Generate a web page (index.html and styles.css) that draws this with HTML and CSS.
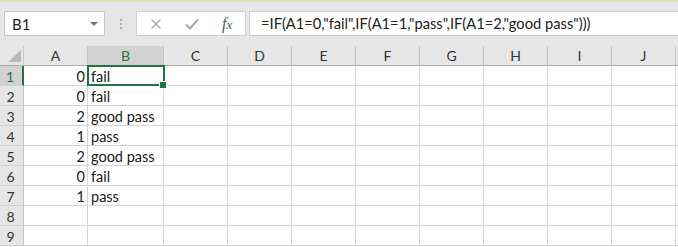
FILE: index.html
```html
<!DOCTYPE html>
<html>
<head>
<meta charset="utf-8">
<link rel="stylesheet" href="styles.css">
</head>
<body>
<div class="app">
  <div class="topbar">
    <div class="namebox"><span class="ref">B1</span><span class="caret"></span></div>
    <div class="grip"><i></i><i></i><i></i></div>
    <div class="fxbox">
      <svg class="ico" width="12" height="12" viewBox="0 0 12 12"><path d="M1.5 1.5 L10.5 10.5 M10.5 1.5 L1.5 10.5" stroke="#a8a8a8" stroke-width="1.4" fill="none"/></svg>
      <svg class="ico" width="14" height="12" viewBox="0 0 14 12"><path d="M1 6.5 L5 10.5 L13 1.5" stroke="#a8a8a8" stroke-width="2" fill="none"/></svg>
      <span class="fx"><i>f</i><i class="xs">x</i></span>
    </div>
    <div class="formula">=IF(A1=0,"fail",IF(A1=1,"pass",IF(A1=2,"good pass")))</div>
  </div>
  <div class="sheet">
    <div class="corner"><span class="tri"></span></div>
    <div class="ch">A</div><div class="ch sel">B</div><div class="ch">C</div><div class="ch">D</div><div class="ch">E</div><div class="ch">F</div><div class="ch">G</div><div class="ch">H</div><div class="ch">I</div><div class="ch">J</div><div class="ch last"></div>

    <div class="rh sel">1</div><div class="c num">0</div><div class="c active">fail</div><div class="c"></div><div class="c"></div><div class="c"></div><div class="c"></div><div class="c"></div><div class="c"></div><div class="c"></div><div class="c"></div><div class="c"></div>
    <div class="rh">2</div><div class="c num">0</div><div class="c">fail</div><div class="c"></div><div class="c"></div><div class="c"></div><div class="c"></div><div class="c"></div><div class="c"></div><div class="c"></div><div class="c"></div><div class="c"></div>
    <div class="rh">3</div><div class="c num">2</div><div class="c">good pass</div><div class="c"></div><div class="c"></div><div class="c"></div><div class="c"></div><div class="c"></div><div class="c"></div><div class="c"></div><div class="c"></div><div class="c"></div>
    <div class="rh">4</div><div class="c num">1</div><div class="c">pass</div><div class="c"></div><div class="c"></div><div class="c"></div><div class="c"></div><div class="c"></div><div class="c"></div><div class="c"></div><div class="c"></div><div class="c"></div>
    <div class="rh">5</div><div class="c num">2</div><div class="c">good pass</div><div class="c"></div><div class="c"></div><div class="c"></div><div class="c"></div><div class="c"></div><div class="c"></div><div class="c"></div><div class="c"></div><div class="c"></div>
    <div class="rh">6</div><div class="c num">0</div><div class="c">fail</div><div class="c"></div><div class="c"></div><div class="c"></div><div class="c"></div><div class="c"></div><div class="c"></div><div class="c"></div><div class="c"></div><div class="c"></div>
    <div class="rh">7</div><div class="c num">1</div><div class="c">pass</div><div class="c"></div><div class="c"></div><div class="c"></div><div class="c"></div><div class="c"></div><div class="c"></div><div class="c"></div><div class="c"></div><div class="c"></div>
    <div class="rh">8</div><div class="c"></div><div class="c"></div><div class="c"></div><div class="c"></div><div class="c"></div><div class="c"></div><div class="c"></div><div class="c"></div><div class="c"></div><div class="c"></div><div class="c"></div>
    <div class="rh">9</div><div class="c"></div><div class="c"></div><div class="c"></div><div class="c"></div><div class="c"></div><div class="c"></div><div class="c"></div><div class="c"></div><div class="c"></div><div class="c"></div><div class="c"></div>
  </div>
</div>
</body>
</html>
```

FILE: styles.css
```css
* { box-sizing: border-box; }
html, body { margin: 0; padding: 0; }
body {
  width: 678px;
  height: 247px;
  overflow: hidden;
  background: #ffffff;
  font-family: Lato, "Open Sans", sans-serif;
  color: #1e1e1e;
}
.app { width: 678px; }

.topbar {
  height: 46px;
  background: #e6e6e6;
  border-top: 2px solid #dcdeb8;
  padding-top: 9px;
  display: flex;
  align-items: flex-start;
}
.namebox {
  margin-left: 4px;
  width: 101px;
  height: 25px;
  background: #fff;
  border: 1px solid #c6c6c6;
  display: flex;
  align-items: center;
  justify-content: space-between;
  padding: 0 6px 0 7px;
}
.ref { font-size: 15px; color: #222; }
.caret {
  width: 0; height: 0;
  border-left: 4px solid transparent;
  border-right: 4px solid transparent;
  border-top: 4px solid #777;
}
.grip {
  width: 31px;
  height: 25px;
  display: flex;
  flex-direction: column;
  align-items: center;
  justify-content: center;
  gap: 2px;
}
.grip i {
  display: block;
  width: 2px;
  height: 2px;
  background: #a9a9a9;
}
.fxbox {
  width: 110px;
  height: 25px;
  background: #fff;
  border: 1px solid #d0d0d0;
  display: flex;
  align-items: center;
  padding-left: 13px;
}
.fxbox .ico:nth-child(1) { margin-right: 23px; }
.fxbox .ico:nth-child(2) { margin-right: 23px; }
.fx {
  font-family: "Liberation Serif", serif;
  font-size: 16px;
  color: #555;
  line-height: 1;
}
.fx i { font-style: italic; }
.fx .xs { font-size: 13px; }
.formula {
  margin-left: 3px;
  flex: 1;
  height: 25px;
  background: #fff;
  border: 1px solid #d0d0d0;
  border-right: none;
  padding-left: 11px;
  font-size: 14.7px;
  line-height: 23px;
  color: #222;
  white-space: nowrap;
}

.sheet {
  display: grid;
  grid-template-columns: 24px 64px 76px repeat(8, 64px) 1fr;
  grid-template-rows: 20px repeat(9, 20px);
  font-size: 14.5px;
}
.corner {
  background: #e6e6e6;
  border-right: 1px solid #c8c8c8;
  border-bottom: 1px solid #ababab;
  position: relative;
}
.tri {
  position: absolute;
  right: 2px;
  bottom: 3px;
  width: 0; height: 0;
  border-left: 13px solid transparent;
  border-bottom: 12px solid #b9b9b9;
}
.ch {
  background: #e6e6e6;
  border-right: 1px solid #c4c4c4;
  border-bottom: 1px solid #ababab;
  text-align: center;
  font-size: 14px;
  line-height: 20px;
  color: #333;
}
.ch.sel { background: #d2d2d2; color: #217346; border-bottom-color: #217346; }
.ch.last { border-right: none; }
.rh {
  background: #e6e6e6;
  border-right: 1px solid #c4c4c4;
  border-bottom: 1px solid #d0d0d0;
  text-align: center;
  font-size: 14px;
  line-height: 21px;
  color: #333;
  padding-right: 2px;
}
.rh.sel { background: #d2d2d2; color: #217346; border-right: 2px solid #217346; }
.c {
  border-right: 1px solid #d4d4d4;
  border-bottom: 1px solid #d4d4d4;
  line-height: 21px;
  padding: 0 3px;
  white-space: nowrap;
  overflow: visible;
  color: #1a1a1a;
}
.c.num { text-align: right; padding-right: 2px; }
.c.active { position: relative; }
.c.active::after {
  content: "";
  position: absolute;
  left: -1px;
  top: -1px;
  right: -2px;
  bottom: -1px;
  border: 2px solid #217346;
}
.c.active::before {
  content: "";
  position: absolute;
  right: -4px;
  bottom: -4px;
  width: 6px;
  height: 6px;
  background: #217346;
  border: 1px solid #fff;
  z-index: 2;
}
```
